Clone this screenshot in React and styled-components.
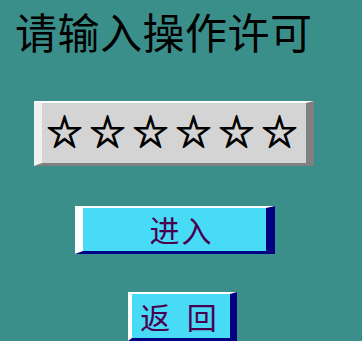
import React from 'react';
import styled, { createGlobalStyle } from 'styled-components';

const GlobalStyle = createGlobalStyle`
  html, body {
    margin: 0;
    padding: 0;
    background: #3b8f8a;
    overflow: hidden;
  }
  * {
    box-sizing: border-box;
  }
`;

const Screen = styled.div`
  width: 362px;
  height: 341px;
  background: #3b8f8a;
  display: flex;
  flex-direction: column;
  align-items: flex-start;
  font-family: "Noto Sans CJK SC", "Noto Sans", sans-serif;
`;

const Title = styled.h1`
  margin: 6px 0 0 15px;
  font-size: 42px;
  line-height: 50px;
  font-weight: 400;
  color: #000;
  letter-spacing: 0.5px;
`;

const PasswordBox = styled.div`
  margin: 45px 0 0 34px;
  width: 280px;
  height: 65px;
  background: #d4d4d4;
  border-style: solid;
  border-width: 2px 8px 3px 8px;
  border-color: #ffffff #808080 #808080 #f0f0f0;
  display: flex;
  align-items: center;
  padding: 0 0 6px 5px;
  font-size: 35px;
  color: #000;
  letter-spacing: 8px;
  -webkit-text-stroke: 1.2px #000;
  white-space: nowrap;
`;

const Button = styled.button`
  margin: ${(p) => p.$top}px 0 0 ${(p) => p.$left}px;
  width: ${(p) => p.$width}px;
  height: 49px;
  padding: 0 0 0 ${(p) => p.$shift}px;
  background: #48dbf6;
  border-style: solid;
  border-width: 2px ${(p) => p.$right}px 3px ${(p) => p.$leftBorder}px;
  border-color: #ffffff #000080 #000080 #ffffff;
  color: #4a0050;
  font-family: "Noto Sans CJK SC", "Noto Sans", sans-serif;
  font-size: 30px;
  line-height: 1;
  letter-spacing: ${(p) => p.$spacing}px;
  cursor: pointer;
  display: flex;
  align-items: center;
  justify-content: center;
  white-space: pre;
`;

export default function App() {
  return (
    <>
      <GlobalStyle />
      <Screen>
        <Title>请输入操作许可</Title>
        <PasswordBox>☆☆☆☆☆☆</PasswordBox>
        <Button $top={40} $left={75} $width={200} $leftBorder={8} $right={9} $spacing={2} $shift={14}>
          进入
        </Button>
        <Button $top={38} $left={128} $width={109} $leftBorder={4} $right={7} $spacing={5} $shift={0}>
          返 回
        </Button>
      </Screen>
    </>
  );
}
